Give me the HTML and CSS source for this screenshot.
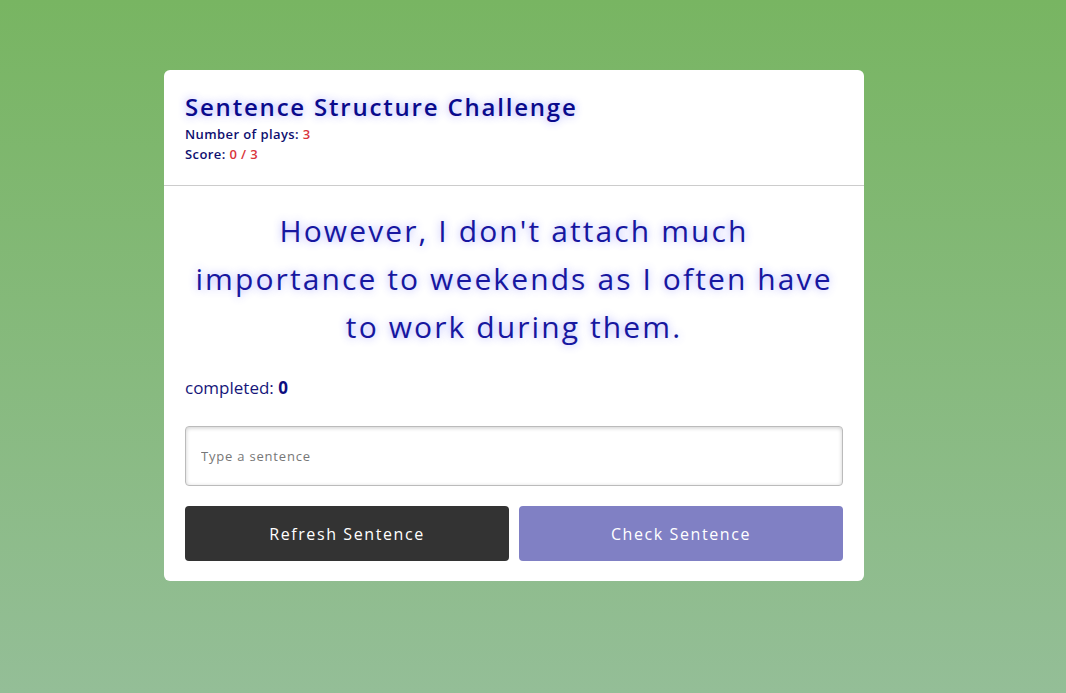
FILE: index.html
```html
<!DOCTYPE html>
<html>
<head>
<meta charset="utf-8">
<link rel="stylesheet" href="styles.css">
</head>
<body>
<main class="page">
  <section class="card">
    <header class="card-header">
      <h1 class="title">Sentence Structure Challenge</h1>
      <p class="stat">Number of plays: <span class="red">3</span></p>
      <p class="stat">Score: <span class="red">0 / 3</span></p>
    </header>
    <div class="card-body">
      <p class="sentence">However, I don't attach much importance to weekends as I often have to work during them.</p>
      <p class="completed">completed: <b>0</b></p>
      <input class="input" type="text" placeholder="Type a sentence">
      <div class="buttons">
        <button class="btn btn-dark">Refresh Sentence</button>
        <button class="btn btn-purple">Check Sentence</button>
      </div>
    </div>
  </section>
</main>
</body>
</html>
```
FILE: styles.css
```css
* { box-sizing: border-box; }
html, body { margin: 0; height: 100%; }
body {
  font-family: "Open Sans", "Noto Sans", sans-serif;
  background: linear-gradient(to bottom, #78b562 0%, #94be97 100%);
  min-height: 693px;
}
.page {
  padding-top: 70px;
  padding-left: 164px;
}
.card {
  width: 700px;
  background: #fff;
  border-radius: 6px;
  overflow: hidden;
}
.card-header {
  padding: 20px 21px 21px;
  border-bottom: 1px solid #cccccc;
}
.title {
  margin: 0;
  font-size: 24px;
  font-weight: 600;
  letter-spacing: 1.8px;
  color: #0a0a8c;
  line-height: 34px;
  text-shadow: 0 0 8px rgba(60, 60, 255, 0.45);
}
.stat {
  margin: 0;
  font-size: 13px;
  font-weight: 600;
  letter-spacing: 0.4px;
  line-height: 20px;
  color: #0f0f70;
}
.red { color: #d9343b; }
.card-body {
  padding: 21px 21px 20px;
}
.sentence {
  margin: 0 0 24px;
  text-align: center;
  font-size: 30px;
  letter-spacing: 2.1px;
  line-height: 48px;
  color: #1717a0;
  text-shadow: 0 0 8px rgba(70, 70, 255, 0.45);
}
.completed {
  margin: 0 0 25px;
  font-size: 17px;
  line-height: 26px;
  color: #16167a;
}
.completed b { font-weight: 700; color: #0d0d80; }
.input {
  display: block;
  width: 100%;
  height: 60px;
  border: 1px solid #bbbbbb;
  border-radius: 4px;
  box-shadow: inset 0 1px 4px rgba(0,0,0,0.2);
  padding: 0 15px;
  font-family: inherit;
  font-size: 13px;
  letter-spacing: 0.8px;
  color: #333;
  outline: none;
}
.input::placeholder { color: #777; }
.buttons {
  display: flex;
  gap: 10px;
  margin-top: 20px;
}
.btn {
  flex: 1;
  height: 55px;
  border: none;
  border-radius: 4px;
  color: #fff;
  font-family: inherit;
  font-size: 16px;
  font-weight: 500;
  letter-spacing: 1.6px;
}
.btn-dark { background: #333333; }
.btn-purple { background: #8080c4; }
```
